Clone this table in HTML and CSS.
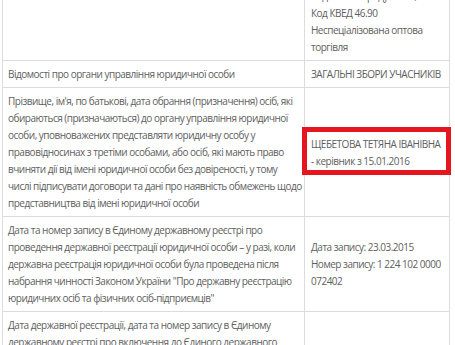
FILE: index.html
```html
<!DOCTYPE html>
<html lang="uk">
<head>
<meta charset="utf-8">
<title>Відомості про юридичну особу</title>
<link rel="stylesheet" href="styles.css">
</head>
<body>
<div class="info">
  <div class="row">
    <div class="label"></div>
    <div class="value top">
      <p>Код КВЕД 46.31</p>
      <p>Оптова торгівля фруктами й<br>овочами, м'ясом і іншими<br>подібними продуктами,<br>Код КВЕД 46.90<br>Неспеціалізована оптова<br>торгівля</p>
    </div>
  </div>
  <div class="row">
    <div class="label">Відомості про органи управління юридичної особи</div>
    <div class="value">ЗАГАЛЬНІ ЗБОРИ УЧАСНИКІВ</div>
  </div>
  <div class="row">
    <div class="label">Прізвище, ім'я, по батькові, дата обрання (призначення) осіб, які<br>обираються (призначаються) до органу управління юридичної<br>особи, уповноважених представляти юридичну особу у<br>правовідносинах з третіми особами, або осіб, які мають право<br>вчиняти дії від імені юридичної особи без довіреності, у тому<br>числі підписувати договори та дані про наявність обмежень щодо<br>представництва від імені юридичної особи</div>
    <div class="value"><span class="mark">ЩЕБЕТОВА ТЕТЯНА ІВАНІВНА<br>- керівник з 15.01.2016</span></div>
  </div>
  <div class="row">
    <div class="label">Дата та номер запису в Єдиному державному реєстрі про<br>проведення державної реєстрації юридичної особи – у разі, коли<br>державна реєстрація юридичної особи була проведена після<br>набрання чинності Законом України "Про державну реєстрацію<br>юридичних осіб та фізичних осіб-підприємців"</div>
    <div class="value">Дата запису: 23.03.2015<br>Номер запису: 1 224 102 0000<br>072402</div>
  </div>
  <div class="row">
    <div class="label">Дата державної реєстрації, дата та номер запису в Єдиному<br>державному реєстрі про включення до Єдиного державного<br>реєстру відомостей про юридичну особу</div>
    <div class="value"></div>
  </div>
</div>
</body>
</html>
```
FILE: styles.css
```css
html, body {
  margin: 0;
  padding: 0;
  background: #fff;
  overflow: hidden;
}

.info {
  width: 446px;
  margin: -68px 0 0 2px;
  border-left: 1px solid #dcdcdc;
  border-right: 1px solid #dcdcdc;
  font-family: "Open Sans", "Noto Sans", sans-serif;
  font-size: 10px;
  letter-spacing: -0.5px;
  line-height: 17px;
  color: #5e5e5e;
}

.row {
  display: grid;
  grid-template-columns: 302px 1fr;
  border-bottom: 1px solid #dcdcdc;
}

.label {
  padding: 5px 5px 4px;
  border-right: 1px solid #dcdcdc;
  white-space: nowrap;
}

.value {
  padding: 5px 6px 4px;
  display: flex;
  flex-direction: column;
  justify-content: center;
  white-space: nowrap;
}

.value.top {
  justify-content: flex-start;
}

.value p {
  margin: 0;
}

.mark {
  position: relative;
  display: block;
}

.mark::after {
  content: "";
  position: absolute;
  top: -9px;
  bottom: -5px;
  left: -9px;
  right: -8px;
  border: 5px solid #e5161f;
}
```
